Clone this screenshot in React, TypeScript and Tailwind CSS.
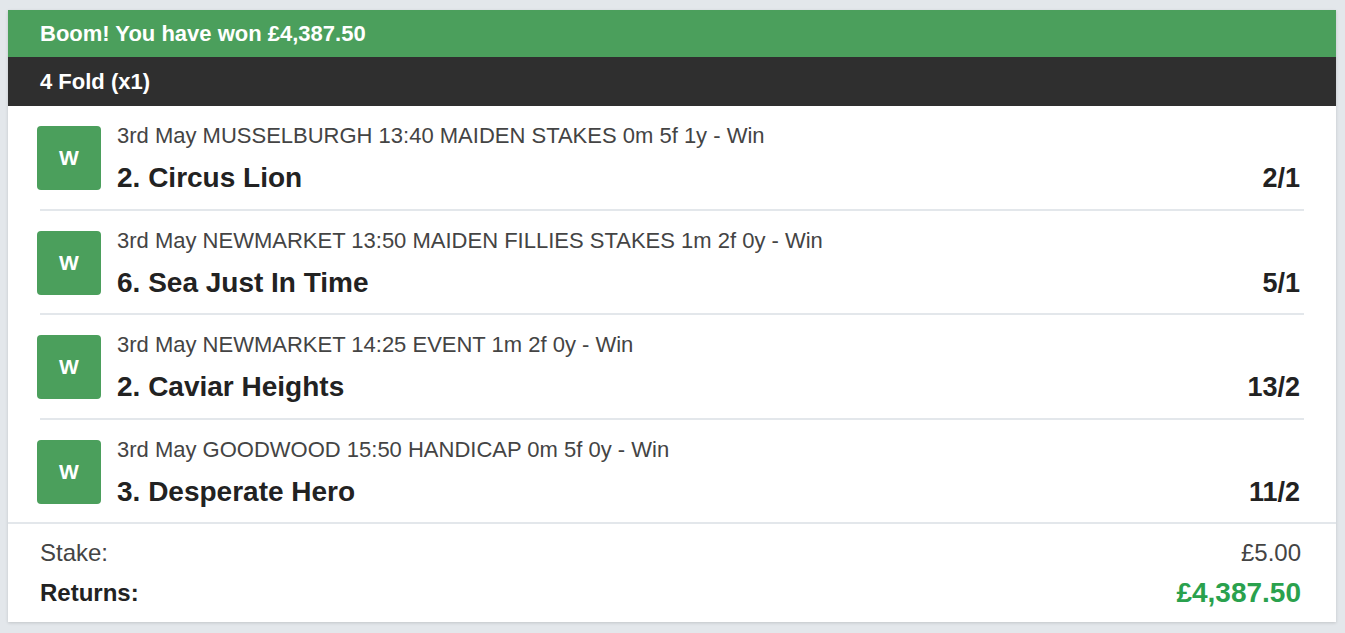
import React from "react";

const legs = [
  { meta: "3rd May MUSSELBURGH 13:40 MAIDEN STAKES 0m 5f 1y - Win", name: "2. Circus Lion", odds: "2/1" },
  { meta: "3rd May NEWMARKET 13:50 MAIDEN FILLIES STAKES 1m 2f 0y - Win", name: "6. Sea Just In Time", odds: "5/1" },
  { meta: "3rd May NEWMARKET 14:25 EVENT 1m 2f 0y - Win", name: "2. Caviar Heights", odds: "13/2" },
  { meta: "3rd May GOODWOOD 15:50 HANDICAP 0m 5f 0y - Win", name: "3. Desperate Hero", odds: "11/2" },
];

export default function App() {
  return (
    <div
      className="min-h-[633px] bg-[#e3e7eb] pt-[10px] pl-[8px] pr-[9px]"
      style={{ fontFamily: '"Liberation Sans", Arial, Helvetica, sans-serif' }}
    >
      <div className="bg-white shadow-[0_1px_3px_rgba(0,0,0,0.15)]">
        <div className="h-[47px] bg-[#4b9f5c] px-[32px] flex items-center text-white font-bold text-[22px]">
          Boom! You have won £4,387.50
        </div>
        <div className="h-[49px] bg-[#2f2f2f] px-[32px] flex items-center text-white font-bold text-[22px]">
          4 Fold (x1)
        </div>
        <div className="px-[32px]">
          {legs.map((l, i) => (
            <div
              key={i}
              className={`flex items-start pt-[20px] ${i < legs.length - 1 ? "h-[104.5px] border-b-2 border-[#e3e7eb]" : "h-[102.5px]"}`}
            >
              <div className="ml-[-3px] w-[64px] h-[64px] rounded-[4px] bg-[#4b9f5c] flex items-center justify-center text-white font-bold text-[21px] shrink-0">
                W
              </div>
              <div className="ml-[16px] flex-1 flex flex-col mt-[-1px]">
                <div className="text-[22px] leading-[22px] text-[#444]">{l.meta}</div>
                <div className="flex items-center justify-between mt-[16px]">
                  <div className="text-[28px] leading-[30px] font-bold text-[#222]">{l.name}</div>
                  <div className="text-[27px] leading-[30px] font-bold text-[#222] mr-[4px]">{l.odds}</div>
                </div>
              </div>
            </div>
          ))}
        </div>
        <div className="border-t-2 border-[#e3e7eb] px-[32px] pt-[15px] pb-[13px] flex flex-col gap-[10px]">
          <div className="flex justify-between items-center h-[28px] text-[24px] text-[#444]">
            <span>Stake:</span>
            <span className="mr-[3px]">£5.00</span>
          </div>
          <div className="flex justify-between items-center h-[32px] text-[24px] font-bold text-[#222]">
            <span>Returns:</span>
            <span className="text-[28px] text-[#2aa14d] mr-[3px]">£4,387.50</span>
          </div>
        </div>
      </div>
    </div>
  );
}
